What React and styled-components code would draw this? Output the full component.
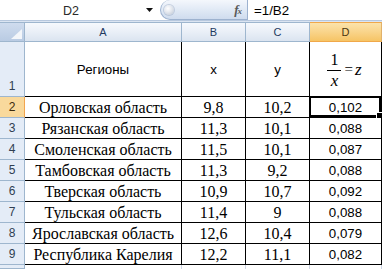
import React from 'react';
import styled, { createGlobalStyle, css } from 'styled-components';

const GlobalStyle = createGlobalStyle`
  html, body { margin: 0; padding: 0; background: #ffffff; }
  body { width: 382px; height: 269px; overflow: hidden; }
  * { box-sizing: border-box; }
`;

const Window = styled.div`
  width: 382px;
  height: 269px;
  display: flex;
  flex-direction: column;
  background: #ffffff;
  overflow: hidden;
`;

const FormulaBar = styled.div`
  height: 21px;
  display: flex;
  align-items: stretch;
  background: #ffffff;
  border-bottom: 1px solid #b7c8de;
  font-family: "Liberation Sans", Arial, sans-serif;
`;

const NameBox = styled.div`
  width: 142px;
  display: flex;
  align-items: center;
  justify-content: center;
  font-size: 12.5px;
  color: #2a2a2a;
  padding-top: 1px;
`;

const ArrowBox = styled.div`
  width: 18px;
  display: flex;
  align-items: center;
  justify-content: center;
  padding-right: 3px;
`;

const Pill = styled.div`
  width: 87px;
  height: 20px;
  display: flex;
  align-items: center;
  justify-content: space-between;
  padding: 0 6px 0 3px;
  border: 1px solid #9db2cf;
  border-top: none;
  border-right: none;
  border-radius: 0 0 0 10px;
  border-top-left-radius: 10px;
  background: linear-gradient(#f4f7fc 0%, #e3ebf6 45%, #cfdcee 100%);
`;

const Grip = styled.div`
  width: 10px;
  height: 10px;
  border-radius: 50%;
  background: radial-gradient(circle at 40% 35%, #ffffff 0%, #e3e7ee 45%, #b9c3d0 100%);
  box-shadow: 0 0 0 1px rgba(160, 176, 200, 0.5);
`;

const Fx = styled.span`
  font-family: "Liberation Serif", "Times New Roman", serif;
  font-style: italic;
  font-weight: bold;
  font-size: 13px;
  color: #5a5a5a;
  letter-spacing: -1px;
  & > small {
    font-size: 9px;
  }
`;

const FormulaInput = styled.div`
  flex: 1;
  display: flex;
  align-items: center;
  padding-left: 6px;
  border-left: 1px solid #9db2cf;
  font-size: 13.3px;
  color: #000000;
`;

const Band = styled.div`
  height: 3px;
  background: #dbe5f2;
`;

const Grid = styled.div`
  flex: 1;
  display: grid;
  grid-template-columns: 25px 157px 64px 64px 72px;
  grid-template-rows: 20px 55px repeat(8, 21px) 1fr;
`;

const headerBase = css`
  font-family: "Liberation Sans", Arial, sans-serif;
  font-size: 11px;
  display: flex;
  justify-content: center;
  border-right: 1px solid #9eb6ce;
  border-bottom: 1px solid #9eb6ce;
`;

const Corner = styled.div`
  ${headerBase};
  border-top: 1px solid #9eb6ce;
  background: linear-gradient(#cfdcee, #b9cbe3);
  align-items: flex-end;
  justify-content: flex-end;
  padding: 0 2px 2px 0;
`;

const ColHeader = styled.div`
  ${headerBase};
  border-top: 1px solid #9eb6ce;
  align-items: center;
  color: ${(p) => (p.$active ? '#4a3510' : '#1f3a5f')};
  background: ${(p) =>
    p.$active
      ? 'linear-gradient(#fbe3ab 0%, #f9d48a 50%, #f6c465 100%)'
      : 'linear-gradient(#f6f9fd 0%, #e9eff7 50%, #dbe4f0 100%)'};
  ${(p) => p.$active && css`border-color: #f0a84a; border-right-color: #e1b16a;`}
`;

const RowHeader = styled.div`
  ${headerBase};
  align-items: flex-end;
  padding-bottom: 3px;
  font-size: 12px;
  color: ${(p) => (p.$active ? '#3b2a0c' : '#2f3e52')};
  background: ${(p) => (p.$active ? '#f9d99c' : '#e4ecf7')};
  ${(p) => p.$active && css`border-right-color: #f2a54f;`}
`;

const Cell = styled.div`
  display: flex;
  align-items: center;
  justify-content: center;
  border-right: 1px solid #000000;
  border-bottom: 1px solid #000000;
  background: #ffffff;
  color: #000000;
  white-space: nowrap;
  overflow: visible;
`;

const HeadCell = styled(Cell)`
  font-family: "Liberation Sans", Arial, sans-serif;
  font-size: 13.3px;
  padding-top: 1px;
`;

const SerifCell = styled(Cell)`
  font-family: "Liberation Serif", "Times New Roman", serif;
  font-size: 16px;
  padding-top: 1px;
`;

const ValueCell = styled(Cell)`
  font-family: "Liberation Sans", Arial, sans-serif;
  font-size: 13.3px;
  position: relative;
  ${(p) =>
    p.$selected &&
    css`
      &::before {
        content: '';
        position: absolute;
        left: -1px;
        top: -1px;
        right: 0;
        bottom: 0;
        border: 2px solid #000000;
      }
      &::after {
        content: '';
        position: absolute;
        right: -2px;
        bottom: -2px;
        width: 5px;
        height: 5px;
        background: #000000;
        border: 1px solid #ffffff;
      }
    `}
`;

const EmptyCell = styled.div`
  border-right: 1px solid #d0d7e5;
  background: #ffffff;
`;

const Formula = styled.div`
  display: flex;
  align-items: center;
  gap: 2px;
  font-family: "Liberation Serif", "Times New Roman", serif;
  color: #000000;
  margin-right: 2px;
`;

const Fraction = styled.div`
  display: flex;
  flex-direction: column;
  align-items: center;
`;

const Num = styled.span`
  padding: 0 3px 3px;
  border-bottom: 1px solid #000000;
  font-size: 16px;
  line-height: 14px;
`;

const Den = styled.span`
  padding-top: 4px;
  font-style: italic;
  font-size: 17px;
  line-height: 12px;
`;

const Eq = styled.span`
  font-size: 15px;
  margin-left: 1px;
`;

const Var = styled.i`
  font-size: 17px;
`;

const rows = [
  ['Орловская область', '9,8', '10,2', '0,102'],
  ['Рязанская область', '11,3', '10,1', '0,088'],
  ['Смоленская область', '11,5', '10,1', '0,087'],
  ['Тамбовская область', '11,3', '9,2', '0,088'],
  ['Тверская область', '10,9', '10,7', '0,092'],
  ['Тульская область', '11,4', '9', '0,088'],
  ['Ярославская область', '12,6', '10,4', '0,079'],
  ['Республика Карелия', '12,2', '11,1', '0,082'],
];

export default function App() {
  return (
    <Window>
      <GlobalStyle />
      <FormulaBar>
        <NameBox>D2</NameBox>
        <ArrowBox>
          <svg width="7" height="4" viewBox="0 0 7 4">
            <path d="M0 0 H7 L3.5 4 Z" fill="#111" />
          </svg>
        </ArrowBox>
        <Pill>
          <Grip />
          <Fx>
            f<small>x</small>
          </Fx>
        </Pill>
        <FormulaInput>=1/B2</FormulaInput>
      </FormulaBar>
      <Band />
      <Grid>
        <Corner>
          <svg width="11" height="10" viewBox="0 0 11 10">
            <path d="M11 0 V10 H0 Z" fill="#f3f6fa" />
          </svg>
        </Corner>
        <ColHeader>A</ColHeader>
        <ColHeader>B</ColHeader>
        <ColHeader>C</ColHeader>
        <ColHeader $active>D</ColHeader>

        <RowHeader>1</RowHeader>
        <HeadCell>Регионы</HeadCell>
        <HeadCell>x</HeadCell>
        <HeadCell>y</HeadCell>
        <HeadCell>
          <Formula>
            <Fraction>
              <Num>1</Num>
              <Den>x</Den>
            </Fraction>
            <Eq>=</Eq>
            <Var>z</Var>
          </Formula>
        </HeadCell>

        {rows.map((r, i) => (
          <React.Fragment key={r[0]}>
            <RowHeader $active={i === 0}>{i + 2}</RowHeader>
            <SerifCell>{r[0]}</SerifCell>
            <SerifCell>{r[1]}</SerifCell>
            <SerifCell>{r[2]}</SerifCell>
            <ValueCell $selected={i === 0}>{r[3]}</ValueCell>
          </React.Fragment>
        ))}

        <RowHeader />
        <EmptyCell />
        <EmptyCell />
        <EmptyCell />
        <EmptyCell />
      </Grid>
    </Window>
  );
}
